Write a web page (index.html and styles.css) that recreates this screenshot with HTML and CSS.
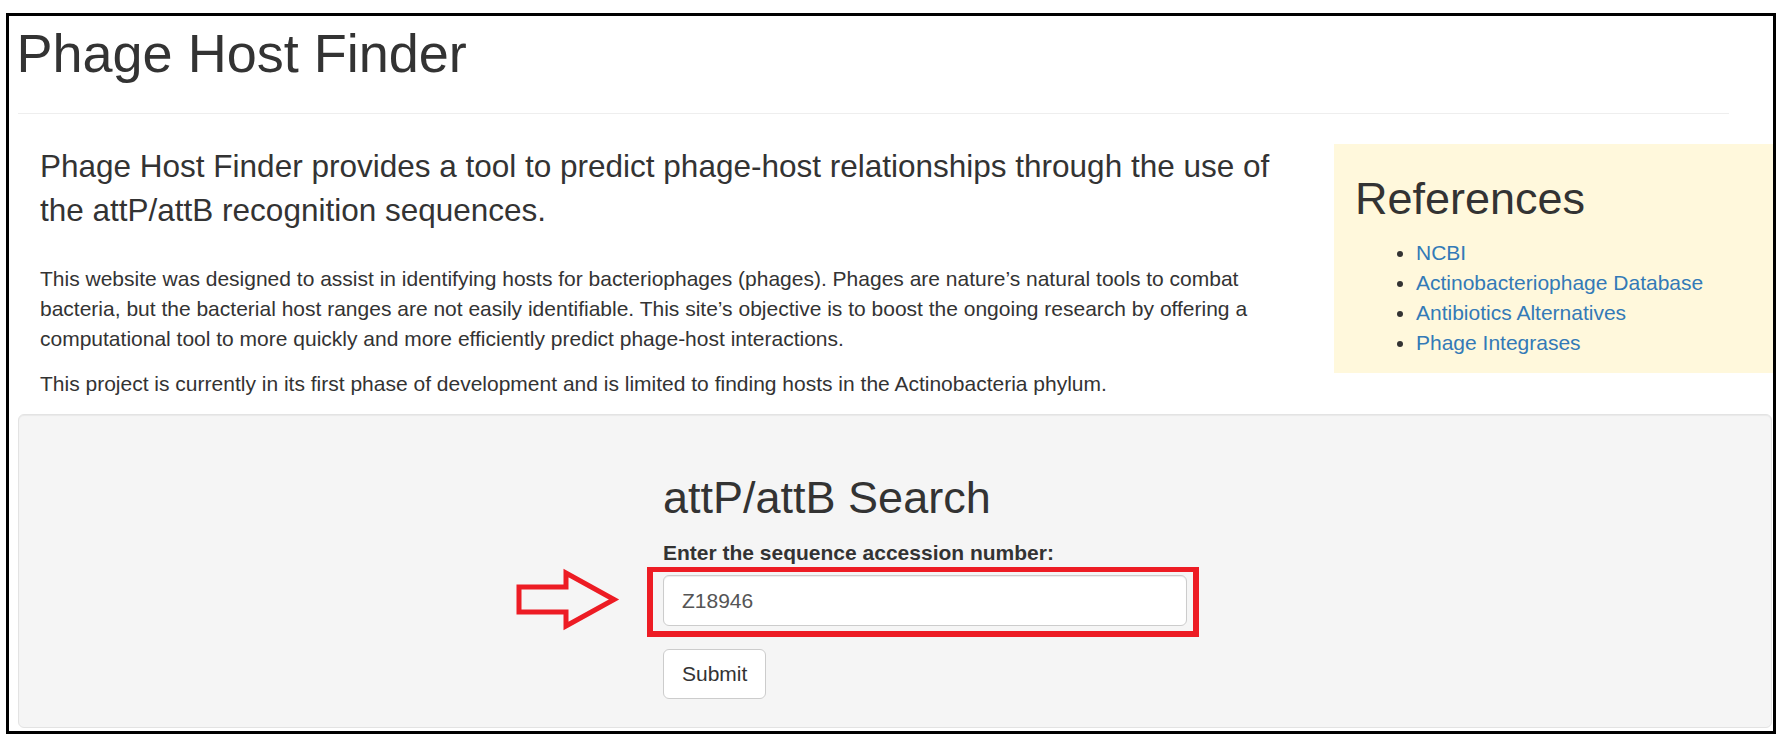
FILE: index.html
```html
<!DOCTYPE html>
<html lang="en">
<head>
<meta charset="utf-8">
<title>Phage Host Finder</title>
<link rel="stylesheet" href="styles.css">
</head>
<body>
<div class="frame">
  <div class="header">
    <h1 class="title">Phage Host Finder</h1>
    <hr class="rule">
  </div>
  <div class="row">
    <div class="main">
      <p class="lead">Phage Host Finder provides a tool to predict phage-host relationships through the use of the attP/attB recognition sequences.</p>
      <p class="text">This website was designed to assist in identifying hosts for bacteriophages (phages). Phages are nature’s natural tools to combat bacteria, but the bacterial host ranges are not easily identifiable. This site’s objective is to boost the ongoing research by offering a computational tool to more quickly and more efficiently predict phage-host interactions.</p>
      <p class="text">This project is currently in its first phase of development and is limited to finding hosts in the Actinobacteria phylum.</p>
    </div>
    <div class="refs">
      <h2 class="refs-title">References</h2>
      <ul class="refs-list">
        <li><a href="#">NCBI</a></li>
        <li><a href="#">Actinobacteriophage Database</a></li>
        <li><a href="#">Antibiotics Alternatives</a></li>
        <li><a href="#">Phage Integrases</a></li>
      </ul>
    </div>
  </div>
  <div class="well">
    <form class="search">
      <h2 class="search-title">attP/attB Search</h2>
      <label class="label" for="acc">Enter the sequence accession number:</label>
      <div class="field">
        <input class="input" id="acc" type="text" value="Z18946">
        <span class="highlight"></span>
        <svg class="arrow" viewBox="0 0 110 70" width="110" height="70">
          <polygon points="9,22 56,22 56,8 104,34.5 56,61 56,47 9,47" fill="none" stroke="#ed1c24" stroke-width="5" stroke-linejoin="miter" stroke-miterlimit="10"/>
        </svg>
      </div>
      <button class="btn" type="button">Submit</button>
    </form>
  </div>
</div>
</body>
</html>
```
FILE: styles.css
```css
html, body {
  margin: 0;
  padding: 0;
  background: #fff;
}
body {
  font-family: "Liberation Sans", Arial, sans-serif;
  color: #333;
}
.frame {
  box-sizing: border-box;
  width: 1770px;
  height: 721px;
  margin: 13px 0 0 6px;
  border: 3px solid #000;
  overflow: hidden;
  background: #fff;
}
.title {
  font-size: 54px;
  line-height: 59.4px;
  font-weight: normal;
  margin: 7.5px 0 30px 7.5px;
}
.rule {
  border: 0;
  border-top: 1px solid #eee;
  margin: 0 44px 30px 9px;
  height: 0;
}
.row {
  display: flex;
}
.main {
  flex: 0 0 1325px;
  box-sizing: border-box;
  padding: 0 33px 0 31px;
}
.lead {
  font-size: 31.5px;
  line-height: 44.1px;
  margin: 0 0 31.5px;
}
.text {
  font-size: 21px;
  line-height: 30px;
  margin: 0 0 15px;
}
.refs {
  flex: 1;
  align-self: flex-start;
  background: #fff8dc;
  padding: 0 0 0 21px;
}
.refs-title {
  font-size: 45px;
  line-height: 49.5px;
  font-weight: normal;
  margin: 30px 0 15px;
}
.refs-list {
  margin: 0 0 15px;
  padding-left: 61px;
  font-size: 21px;
  line-height: 30px;
}
.refs-list a {
  color: #337ab7;
  text-decoration: none;
}
.well {
  margin: 0 1px 0 9px;
  border: 1px solid #e3e3e3;
  border-radius: 6px;
  background: #f5f5f5;
  padding: 28.5px;
  box-shadow: inset 0 1px 1px rgba(0, 0, 0, 0.05);
}
.search {
  margin: 0 0 0 615.5px;
  width: 524px;
}
.search-title {
  font-size: 45px;
  line-height: 49.5px;
  font-weight: normal;
  margin: 30px 0 15px;
}
.label {
  display: block;
  font-weight: bold;
  font-size: 21px;
  line-height: 30px;
  margin-bottom: 7.5px;
}
.field {
  position: relative;
  margin-bottom: 22.5px;
}
.input {
  display: block;
  box-sizing: border-box;
  width: 100%;
  height: 51px;
  padding: 9px 18px;
  font-family: "Liberation Sans", Arial, sans-serif;
  font-size: 21px;
  color: #555;
  background: #fff;
  border: 1px solid #ccc;
  border-radius: 6px;
  box-shadow: inset 0 1px 1px rgba(0, 0, 0, 0.075);
  outline: none;
}
.highlight {
  position: absolute;
  left: -16px;
  right: -12px;
  top: -8px;
  bottom: -11px;
  border: 6px solid #ed1c24;
  border-top-width: 5.5px;
  pointer-events: none;
}
.arrow {
  position: absolute;
  left: -153px;
  top: -10px;
}
.btn {
  display: inline-block;
  font-family: "Liberation Sans", Arial, sans-serif;
  font-size: 21px;
  line-height: 30px;
  color: #333;
  background: #fff;
  border: 1px solid #ccc;
  border-radius: 6px;
  padding: 9px 18px;
  margin: 0;
}
```
